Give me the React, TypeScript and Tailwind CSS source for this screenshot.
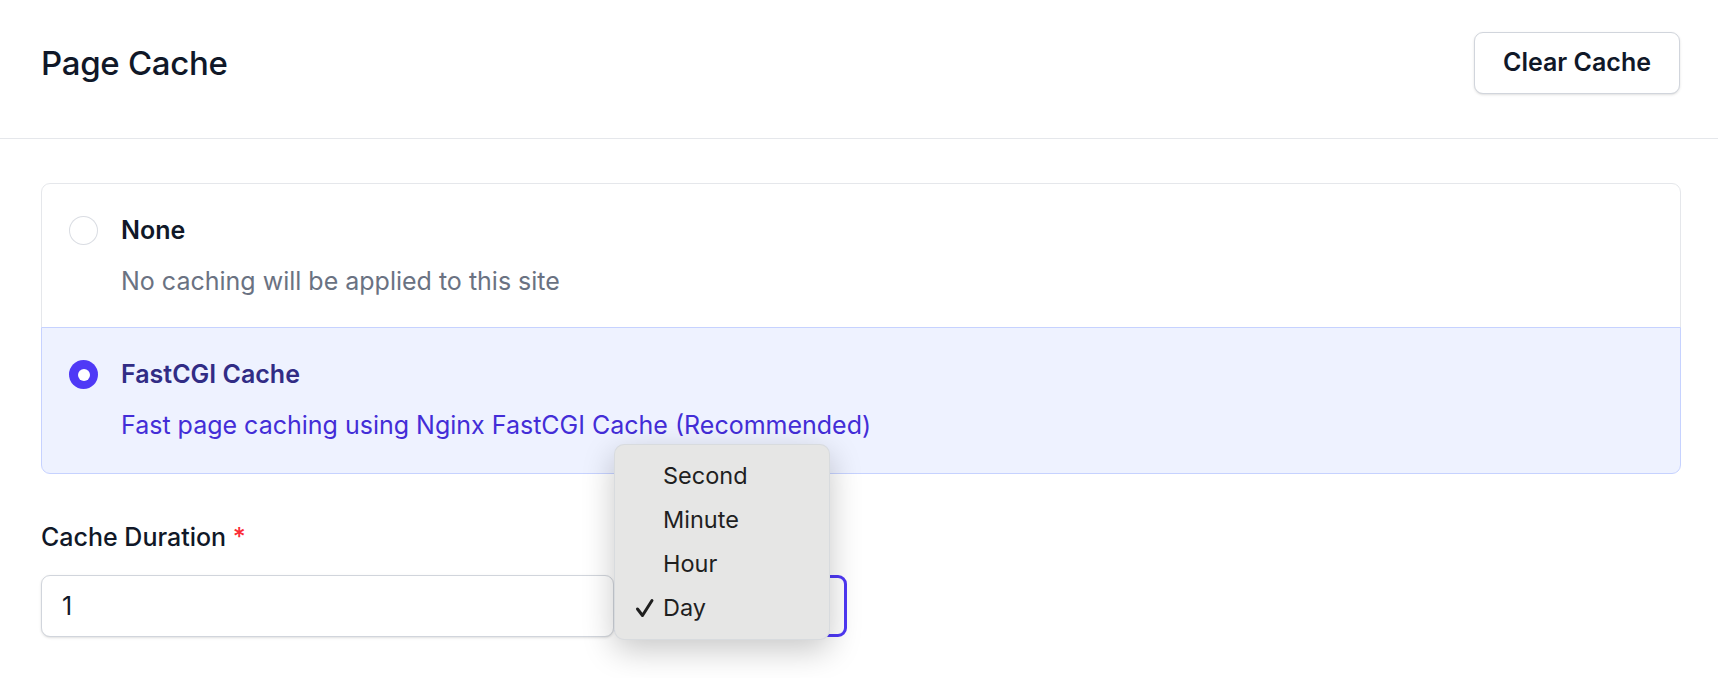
import { useState } from 'react';

const options = [
  { id: 'none', title: 'None', description: 'No caching will be applied to this site' },
  { id: 'fastcgi', title: 'FastCGI Cache', description: 'Fast page caching using Nginx FastCGI Cache (Recommended)' },
];

const units = ['Second', 'Minute', 'Hour', 'Day'];

export default function App() {
  const [selected, setSelected] = useState('fastcgi');
  const [unit, setUnit] = useState('Day');

  return (
    <div className="min-h-screen bg-white font-['Inter',sans-serif] text-gray-900">
      <header className="flex items-center justify-between border-b border-gray-200 pl-[41px] pr-[38px] pt-[32px] pb-[44px]">
        <h1 className="text-[33px] font-medium leading-none tracking-[-0.3px]">Page Cache</h1>
        <button className="h-[62px] rounded-[9px] border border-gray-300 bg-white px-[28px] text-[25px] font-semibold shadow-sm">
          Clear Cache
        </button>
      </header>

      <main className="pl-[41px] pr-[37px] pt-[44px]">
        <div className="-space-y-px rounded-[9px]">
          {options.map((opt, idx) => {
            const checked = selected === opt.id;
            return (
              <label
                key={opt.id}
                onClick={() => setSelected(opt.id)}
                className={`relative flex cursor-pointer gap-[23px] border px-[27px] pt-[30px] ${
                  idx === 0 ? 'rounded-t-[9px] pb-[29px]' : 'rounded-b-[9px] pb-[31px]'
                } ${checked ? 'z-10 border-indigo-200 bg-indigo-50' : 'border-gray-200 bg-white'}`}
              >
                <span className="flex h-[33px] items-center">
                  <span
                    className={`flex h-[29px] w-[29px] items-center justify-center rounded-full ${
                      checked ? 'bg-indigo-600' : 'border border-gray-300/80 bg-white'
                    }`}
                  >
                    {checked && <span className="h-[12px] w-[12px] rounded-full bg-white" />}
                  </span>
                </span>
                <span className="flex flex-col gap-[18px]">
                  <span className={`text-[25px] font-semibold leading-[33px] ${checked ? 'text-indigo-900' : 'text-gray-900'}`}>
                    {opt.title}
                  </span>
                  <span className={`text-[25px] leading-[33px] ${checked ? 'text-indigo-700' : 'text-gray-500'}`}>
                    {opt.description}
                  </span>
                </span>
              </label>
            );
          })}
        </div>

        <div className="mt-[47px]">
          <label className="block text-[25px] font-medium leading-[33px]">
            Cache Duration <span className="text-red-500">*</span>
          </label>
          <div className="relative mt-[21px] flex">
            <input
              defaultValue="1"
              className="h-[62px] w-[573px] rounded-[9px] border border-gray-300 bg-white px-[20px] text-[25px] text-gray-900 shadow-sm outline-none"
            />
            <div className="h-[62px] w-[233px] rounded-[9px] border-[3px] border-indigo-600 bg-white" />

            <div className="absolute left-[573px] top-[-131px] z-20 w-[216px] rounded-[10px] border border-gray-300/70 bg-[#e6e6e5] py-[9px] shadow-[0_10px_32px_rgba(0,0,0,0.22)]">
              {units.map((u) => (
                <div
                  key={u}
                  onClick={() => setUnit(u)}
                  className="relative flex h-[44px] items-center pl-[48px] text-[23.5px] text-[#1f1f1f]"
                >
                  {unit === u && (
                    <svg
                      viewBox="0 0 20 20"
                      className="absolute left-[20px] top-[12px] h-[20px] w-[20px]"
                      fill="none"
                      stroke="#1f1f1f"
                      strokeWidth={3}
                      strokeLinecap="round"
                      strokeLinejoin="round"
                    >
                      <path d="M2.5 11 L7.5 17.5 L17 2.5" />
                    </svg>
                  )}
                  {u}
                </div>
              ))}
            </div>
          </div>
        </div>
      </main>
    </div>
  );
}
